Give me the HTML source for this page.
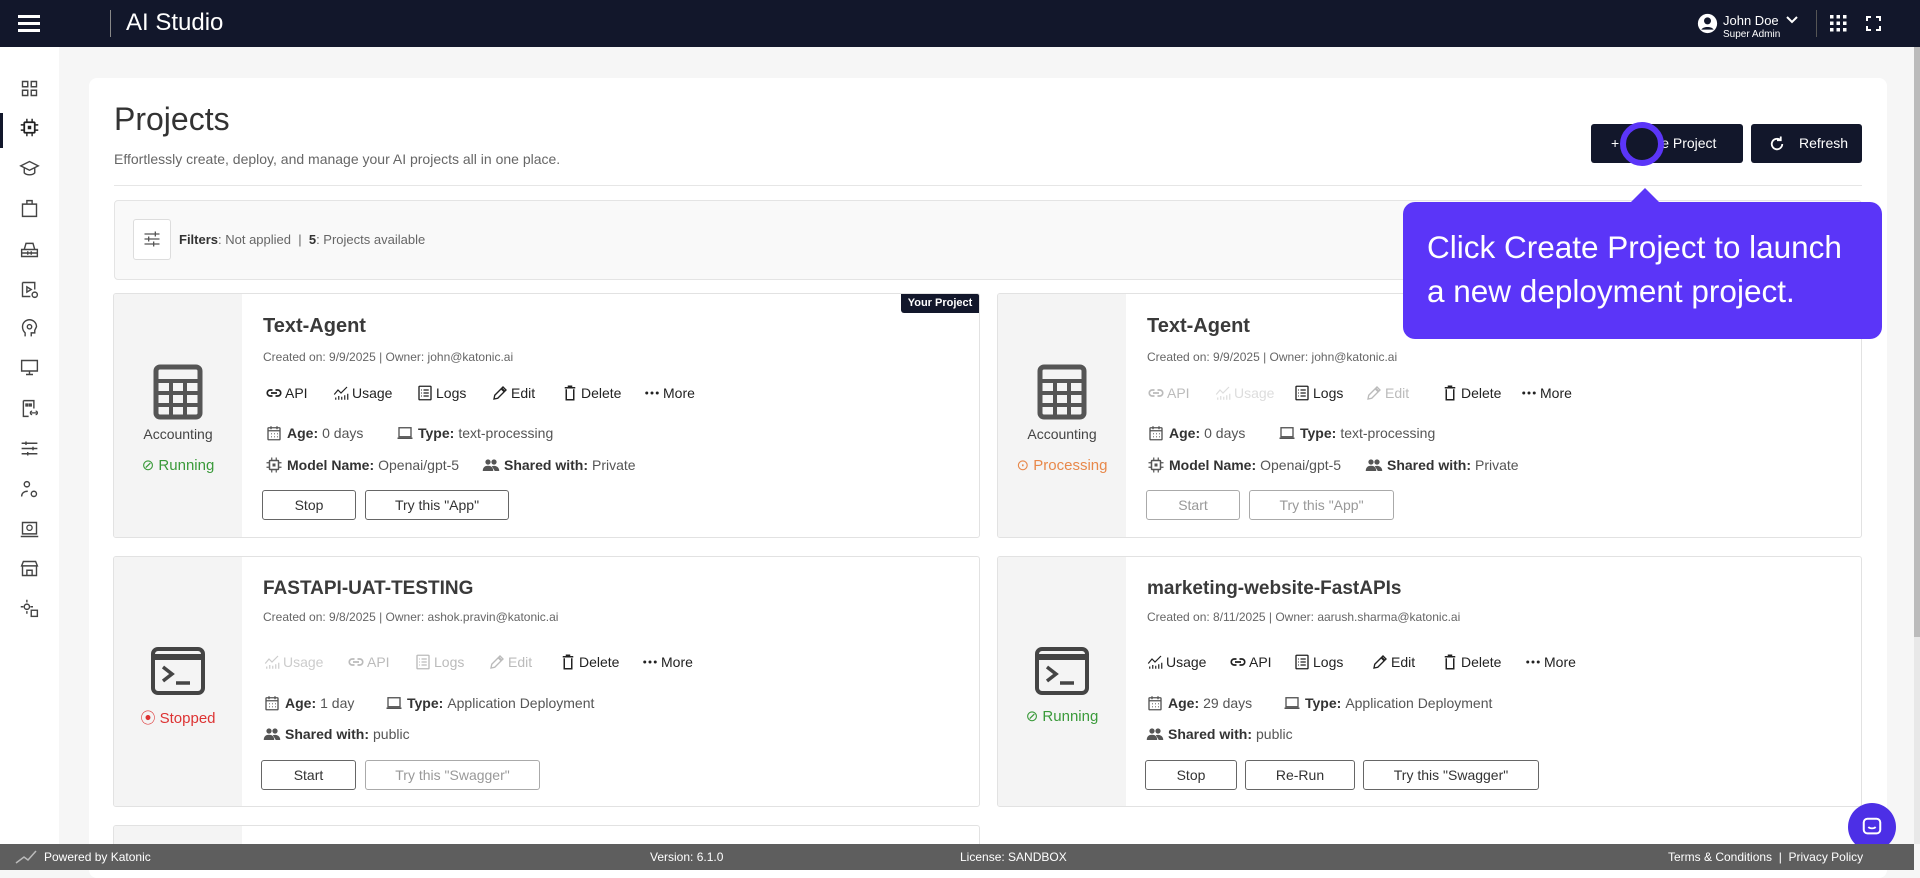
<!DOCTYPE html>
<html><head><meta charset="utf-8"><style>
*{box-sizing:border-box;margin:0;padding:0}
body{width:1920px;height:870px;overflow:hidden;font-family:"Liberation Sans",sans-serif;background:#f6f6f6;position:relative;color:#333}
.top{position:absolute;left:0;top:0;width:1920px;height:47px;background:#12172b;color:#fff}
.side{position:absolute;left:0;top:47px;width:59px;height:797px;background:#fff}
.side svg{position:absolute;left:19px;width:21px;height:21px}
.main{position:absolute;left:89px;top:78px;width:1798px;height:800px;background:#fff;border-radius:8px}
.abs{position:absolute}
.card{position:absolute;background:#fff;border:1px solid #e2e2e2;border-radius:3px;overflow:hidden}
.panel{position:absolute;left:0;top:0;bottom:0;width:128px;background:#f4f4f4}
.title{position:absolute;left:149px;font-size:20px;font-weight:bold;color:#3a3a3a}
.meta{position:absolute;left:149px;font-size:12px;color:#666}
.act{position:absolute;font-size:14px;color:#222;display:flex;align-items:center;gap:2px;white-space:nowrap}
.act svg{width:18px;height:18px}
.dis{color:#bbb}
.info{position:absolute;font-size:14px;color:#555;display:flex;align-items:center;gap:4px;white-space:nowrap}
.info b{color:#333}
.info svg{width:18px;height:18px}
.btn{position:absolute;height:30px;border:1px solid #666;border-radius:3px;font-size:14px;display:flex;align-items:center;justify-content:center;color:#333;background:#fff}
.btn.d{border-color:#aaa;color:#999}
.pl{position:absolute;width:128px;text-align:center;font-size:14px;color:#444}
.foot{position:absolute;left:0;top:844px;width:1914px;height:26px;background:#5e5e5e;color:#fff;font-size:12px}
.foot span{position:absolute;top:6px}
</style></head><body>
<svg width="0" height="0" style="position:absolute">
<defs>
<symbol id="link" viewBox="0 0 24 24"><path d="M10 8H7a4 4 0 0 0 0 8h3M14 8h3a4 4 0 0 1 0 8h-3M8 12h8" fill="none" stroke="currentColor" stroke-width="2.2"/></symbol>
<symbol id="usage" viewBox="0 0 24 24"><path d="M3 14l5-6 4 4 8-8M5 21v-3M9 21v-5M13 21v-4M17 21v-6M21 21v-8" fill="none" stroke="currentColor" stroke-width="1.6"/></symbol>
<symbol id="logs" viewBox="0 0 24 24"><rect x="4" y="3" width="16" height="18" rx="1" fill="none" stroke="currentColor" stroke-width="1.8"/><path d="M7 8h1M7 12h1M7 16h1M10 8h7M10 12h7M10 16h7" stroke="currentColor" stroke-width="1.6"/></symbol>
<symbol id="edit" viewBox="0 0 24 24"><path d="M4 20l1-5L16 4l4 4L9 19z" fill="none" stroke="currentColor" stroke-width="1.8"/><path d="M14 6l4 4" stroke="currentColor" stroke-width="3"/></symbol>
<symbol id="del" viewBox="0 0 24 24"><path d="M5 5h14M9 3h6M7 7v14h10V7" fill="none" stroke="currentColor" stroke-width="2"/></symbol>
<symbol id="more" viewBox="0 0 24 24"><circle cx="5" cy="12" r="2" fill="currentColor"/><circle cx="12" cy="12" r="2" fill="currentColor"/><circle cx="19" cy="12" r="2" fill="currentColor"/></symbol>
<symbol id="cal" viewBox="0 0 24 24"><rect x="4" y="5" width="16" height="16" rx="1" fill="none" stroke="currentColor" stroke-width="1.8"/><path d="M4 9h16M8 3v4M16 3v4M8 13h1M12 13h1M16 13h1M8 17h1M12 17h1M16 17h1" stroke="currentColor" stroke-width="1.8"/></symbol>
<symbol id="lap" viewBox="0 0 24 24"><rect x="4" y="5" width="16" height="12" fill="none" stroke="currentColor" stroke-width="1.8"/><path d="M2 19h20" stroke="currentColor" stroke-width="2"/></symbol>
<symbol id="chip" viewBox="0 0 24 24"><rect x="6" y="6" width="12" height="12" rx="1" fill="none" stroke="currentColor" stroke-width="2"/><rect x="10" y="10" width="4" height="4" fill="currentColor"/><path d="M9 2v4M15 2v4M9 18v4M15 18v4M2 9h4M2 15h4M18 9h4M18 15h4" stroke="currentColor" stroke-width="1.6"/></symbol>
<symbol id="ppl" viewBox="0 0 24 24"><circle cx="8" cy="8" r="3.5" fill="currentColor"/><circle cx="16" cy="8" r="3.5" fill="currentColor"/><path d="M1 20c0-5 3-7 7-7s7 2 7 7zM13 13.5c4-1 10 0 10 6.5h-6" fill="currentColor"/></symbol>
<symbol id="table" viewBox="0 0 50 56"><rect x="3" y="3" width="44" height="50" rx="4" fill="none" stroke="currentColor" stroke-width="5"/><path d="M3 17h44M3 29h44M3 41h44M18 17v36M32 17v36" stroke="currentColor" stroke-width="4"/></symbol>
<symbol id="term" viewBox="0 0 54 48"><rect x="2" y="2" width="50" height="44" rx="5" fill="none" stroke="currentColor" stroke-width="4"/><path d="M2 10h50" stroke="currentColor" stroke-width="6"/><path d="M12 20l9 7-9 7M25 36h14" fill="none" stroke="currentColor" stroke-width="3.5"/></symbol>
</defs></svg>

<div class="top">
 <div class="abs" style="left:18px;top:15px;width:22px;height:3px;background:#fff;box-shadow:0 7px 0 #fff,0 14px 0 #fff"></div>
 <div class="abs" style="left:110px;top:10px;width:1px;height:27px;background:#888"></div>
 <div class="abs" style="left:126px;top:9px;font-size:24px">AI Studio</div>
 <svg class="abs" style="left:1697px;top:13px" width="21" height="21" viewBox="0 0 24 24"><circle cx="12" cy="12" r="11" fill="#fff"/><circle cx="12" cy="9" r="4" fill="#12172b"/><path d="M5 19c2-4 12-4 14 0" fill="#12172b"/></svg>
 <div class="abs" style="left:1723px;top:13px;font-size:13px">John Doe</div>
 <svg class="abs" style="left:1786px;top:15px" width="12" height="10" viewBox="0 0 12 10"><path d="M1 2l5 5 5-5" stroke="#fff" stroke-width="2" fill="none"/></svg>
 <div class="abs" style="left:1723px;top:29px;font-size:10px">Super Admin</div>
 <div class="abs" style="left:1816px;top:10px;width:1px;height:27px;background:#555"></div>
 <svg class="abs" style="left:1830px;top:15px" width="17" height="17" viewBox="0 0 17 17" fill="#fff"><rect x="0" y="0" width="3.5" height="3.5"/><rect x="6.5" y="0" width="3.5" height="3.5"/><rect x="13" y="0" width="3.5" height="3.5"/><rect x="0" y="6.5" width="3.5" height="3.5"/><rect x="6.5" y="6.5" width="3.5" height="3.5"/><rect x="13" y="6.5" width="3.5" height="3.5"/><rect x="0" y="13" width="3.5" height="3.5"/><rect x="6.5" y="13" width="3.5" height="3.5"/><rect x="13" y="13" width="3.5" height="3.5"/></svg>
 <svg class="abs" style="left:1866px;top:16px" width="15" height="15" viewBox="0 0 15 15"><path d="M1 5V1h4M10 1h4v4M14 10v4h-4M5 14H1v-4" stroke="#fff" stroke-width="2" fill="none"/></svg>
</div>

<div class="side">
 <div class="abs" style="left:0;top:66px;width:3px;height:35px;background:#12172b"></div>
 <svg style="top:31px" viewBox="0 0 24 24"><path d="M4 4h6v6H4zM14 4h6v6h-6zM4 14h6v6H4zM14 14h6v6h-6z" fill="none" stroke="#444" stroke-width="1.6"/></svg>
 <svg style="top:70px" viewBox="0 0 24 24"><use href="#chip" color="#222"/></svg>
 <svg style="top:111px" viewBox="0 0 24 24"><path d="M2 9l10-5 10 5-10 5zM6 11v6c3 3 9 3 12 0v-6" fill="none" stroke="#444" stroke-width="1.6"/></svg>
 <svg style="top:151px" viewBox="0 0 24 24"><path d="M4 7h16v14H4zM9 7V3h6v4" fill="none" stroke="#444" stroke-width="1.6"/></svg>
 <svg style="top:192px" viewBox="0 0 24 24"><path d="M3 12h18v8H3zM6 12l2-7h8l2 7M3 16h18M10 14v4M14 14v4" fill="none" stroke="#444" stroke-width="1.6"/></svg>
 <svg style="top:232px" viewBox="0 0 24 24"><path d="M4 4h14v8M4 4v16h9M9 9l5 3-5 3z" fill="none" stroke="#444" stroke-width="1.6"/><circle cx="18" cy="18" r="3" fill="none" stroke="#444" stroke-width="1.6"/></svg>
 <svg style="top:271px" viewBox="0 0 24 24"><path d="M7 21v-4c-2-2-3-4-3-7a8 8 0 0 1 16 0l-2 4v3h-4v4" fill="none" stroke="#444" stroke-width="1.6"/><circle cx="12" cy="10" r="2.5" fill="none" stroke="#444" stroke-width="1.6"/></svg>
 <svg style="top:310px" viewBox="0 0 24 24"><path d="M3 4h18v12H3zM12 16v4M8 20h8" fill="none" stroke="#444" stroke-width="1.6"/></svg>
 <svg style="top:351px" viewBox="0 0 24 24"><path d="M5 3h12v9M5 3v18h6M8 7h2v2H8zM12 7h2v2h-2z" fill="none" stroke="#444" stroke-width="1.6"/><path d="M14 17h6M15 15a2 2 0 0 0 0 4M19 15a2 2 0 0 1 0 4" fill="none" stroke="#444" stroke-width="1.5"/></svg>
 <svg style="top:391px" viewBox="0 0 24 24"><path d="M3 6h18M3 12h18M3 18h18M8 4v4M16 10v4M10 16v4" fill="none" stroke="#444" stroke-width="1.6"/></svg>
 <svg style="top:432px" viewBox="0 0 24 24"><circle cx="9" cy="6" r="3" fill="none" stroke="#444" stroke-width="1.6"/><path d="M3 20c0-4 3-6 7-6M14 18h0" fill="none" stroke="#444" stroke-width="1.6"/><circle cx="17" cy="17" r="3" fill="none" stroke="#444" stroke-width="1.6"/></svg>
 <svg style="top:472px" viewBox="0 0 24 24"><path d="M4 4h16v13H4zM2 20h20" fill="none" stroke="#444" stroke-width="1.6"/><circle cx="12" cy="10" r="3" fill="none" stroke="#444" stroke-width="1.5"/></svg>
 <svg style="top:511px" viewBox="0 0 24 24"><path d="M3 9l2-5h14l2 5zM4 9v11h16V9M9 20v-6h6v6" fill="none" stroke="#444" stroke-width="1.6"/></svg>
 <svg style="top:551px" viewBox="0 0 24 24"><circle cx="9" cy="10" r="3" fill="none" stroke="#444" stroke-width="1.6"/><path d="M9 2v3M9 15v3M2 10h3M13 10h3" stroke="#444" stroke-width="1.6"/><rect x="14" y="14" width="7" height="7" fill="none" stroke="#444" stroke-width="1.6"/></svg>
</div>
<div class="abs" style="left:1914px;top:47px;width:6px;height:797px;background:#e8e8e8"></div>
<div class="abs" style="left:1914px;top:47px;width:6px;height:590px;background:#bbb"></div>

<div class="main">
 <div class="abs" style="left:25px;top:23px;font-size:32px;color:#333">Projects</div>
 <div class="abs" style="left:25px;top:73px;font-size:14px;color:#666">Effortlessly create, deploy, and manage your AI projects all in one place.</div>
 <div class="abs" style="left:25px;top:107px;width:1748px;height:1px;background:#e6e6e6"></div>
 <div class="abs" style="left:1502px;top:46px;width:152px;height:39px;background:#12172b;border-radius:3px;color:#fff;font-size:14px;line-height:39px;padding-left:20px">+ &nbsp;Create Project</div>
 <div class="abs" style="left:1662px;top:46px;width:111px;height:39px;background:#12172b;border-radius:3px;color:#fff;font-size:14px;line-height:39px;padding-left:48px">Refresh</div>
 <svg class="abs" style="left:1679px;top:57px" width="18" height="18" viewBox="0 0 24 24"><path d="M19 12a7 7 0 1 1-3-5.7M17 2v5h-5" fill="none" stroke="#fff" stroke-width="2.4"/></svg>
 <div class="abs" style="left:25px;top:122px;width:1748px;height:80px;background:#f9f9f9;border:1px solid #e4e4e4;border-radius:4px"></div>
 <div class="abs" style="left:44px;top:141px;width:38px;height:41px;border:1px solid #ddd;border-radius:3px;background:#fff"></div>
 <svg class="abs" style="left:53px;top:151px" width="20" height="20" viewBox="0 0 24 24"><path d="M3 6h18M3 12h18M3 18h18M16 3v6M8 9v6M14 15v6" fill="none" stroke="#555" stroke-width="1.6"/></svg>
 <div class="abs" style="left:90px;top:154px;font-size:13px;color:#666"><b style="color:#333">Filters</b>: Not applied &nbsp;| &nbsp;<b style="color:#333">5</b>: Projects available</div>
</div>

<!-- Card 1 -->
<div class="card" style="left:113px;top:293px;width:867px;height:245px">
 <div class="panel"></div>
 <svg class="abs" style="left:39px;top:70px;color:#555" width="50" height="56"><use href="#table"/></svg>
 <div class="pl" style="top:132px">Accounting</div>
 <div class="pl" style="top:162px;color:#3a9a3a;font-size:15px">&#x2298;&#xFE0E; Running</div>
 <div class="abs" style="right:0;top:0;width:78px;height:19px;background:#12172b;color:#fff;font-size:11px;font-weight:bold;text-align:center;line-height:19px;border-bottom-left-radius:3px">Your Project</div>
 <div class="title" style="top:21px">Text-Agent</div>
 <div class="meta" style="top:56px">Created on: 9/9/2025 | Owner: john@katonic.ai</div>
 <div class="act" style="left:151px;top:90px"><svg><use href="#link"/></svg>API</div>
 <div class="act" style="left:218px;top:90px"><svg><use href="#usage"/></svg>Usage</div>
 <div class="act" style="left:302px;top:90px"><svg><use href="#logs"/></svg>Logs</div>
 <div class="act" style="left:377px;top:90px"><svg><use href="#edit"/></svg>Edit</div>
 <div class="act" style="left:447px;top:90px"><svg><use href="#del"/></svg>Delete</div>
 <div class="act" style="left:529px;top:90px"><svg><use href="#more"/></svg>More</div>
 <div class="info" style="left:151px;top:130px"><svg><use href="#cal"/></svg><b>Age:</b> 0 days</div>
 <div class="info" style="left:282px;top:130px"><svg><use href="#lap"/></svg><b>Type:</b> text-processing</div>
 <div class="info" style="left:151px;top:162px"><svg><use href="#chip"/></svg><b>Model Name:</b> Openai/gpt-5</div>
 <div class="info" style="left:368px;top:162px"><svg><use href="#ppl"/></svg><b>Shared with:</b> Private</div>
 <div class="btn" style="left:148px;top:196px;width:94px">Stop</div>
 <div class="btn" style="left:251px;top:196px;width:144px">Try this "App"</div>
</div>

<!-- Card 2 -->
<div class="card" style="left:997px;top:293px;width:865px;height:245px">
 <div class="panel"></div>
 <svg class="abs" style="left:39px;top:70px;color:#555" width="50" height="56"><use href="#table"/></svg>
 <div class="pl" style="top:132px">Accounting</div>
 <div class="pl" style="top:162px;color:#e8884a;font-size:15px">&#x2299;&#xFE0E; Processing</div>
 <div class="title" style="top:21px">Text-Agent</div>
 <div class="meta" style="top:56px">Created on: 9/9/2025 | Owner: john@katonic.ai</div>
 <div class="act dis" style="left:149px;top:90px"><svg><use href="#link"/></svg>API</div>
 <div class="act dis" style="left:216px;top:90px;color:#ddd"><svg><use href="#usage"/></svg>Usage</div>
 <div class="act" style="left:295px;top:90px"><svg><use href="#logs"/></svg>Logs</div>
 <div class="act dis" style="left:367px;top:90px"><svg><use href="#edit"/></svg>Edit</div>
 <div class="act" style="left:443px;top:90px"><svg><use href="#del"/></svg>Delete</div>
 <div class="act" style="left:522px;top:90px"><svg><use href="#more"/></svg>More</div>
 <div class="info" style="left:149px;top:130px"><svg><use href="#cal"/></svg><b>Age:</b> 0 days</div>
 <div class="info" style="left:280px;top:130px"><svg><use href="#lap"/></svg><b>Type:</b> text-processing</div>
 <div class="info" style="left:149px;top:162px"><svg><use href="#chip"/></svg><b>Model Name:</b> Openai/gpt-5</div>
 <div class="info" style="left:367px;top:162px"><svg><use href="#ppl"/></svg><b>Shared with:</b> Private</div>
 <div class="btn d" style="left:148px;top:196px;width:94px">Start</div>
 <div class="btn d" style="left:251px;top:196px;width:145px">Try this "App"</div>
</div>

<!-- Card 3 -->
<div class="card" style="left:113px;top:556px;width:867px;height:251px">
 <div class="panel"></div>
 <svg class="abs" style="left:37px;top:90px;color:#444" width="54" height="48"><use href="#term"/></svg>
 <div class="pl" style="top:150px;color:#d33;font-size:15px">&#x29BF;&#xFE0E; Stopped</div>
 <div class="title" style="top:21px;font-size:19px">FASTAPI-UAT-TESTING</div>
 <div class="meta" style="top:53px">Created on: 9/8/2025 | Owner: ashok.pravin@katonic.ai</div>
 <div class="act dis" style="left:149px;top:96px;color:#ccc"><svg><use href="#usage"/></svg>Usage</div>
 <div class="act dis" style="left:233px;top:96px"><svg><use href="#link"/></svg>API</div>
 <div class="act dis" style="left:300px;top:96px"><svg><use href="#logs"/></svg>Logs</div>
 <div class="act dis" style="left:374px;top:96px"><svg><use href="#edit"/></svg>Edit</div>
 <div class="act" style="left:445px;top:96px"><svg><use href="#del"/></svg>Delete</div>
 <div class="act" style="left:527px;top:96px"><svg><use href="#more"/></svg>More</div>
 <div class="info" style="left:149px;top:137px"><svg><use href="#cal"/></svg><b>Age:</b> 1 day</div>
 <div class="info" style="left:271px;top:137px"><svg><use href="#lap"/></svg><b>Type:</b> Application Deployment</div>
 <div class="info" style="left:149px;top:168px"><svg><use href="#ppl"/></svg><b>Shared with:</b> public</div>
 <div class="btn" style="left:147px;top:203px;width:95px">Start</div>
 <div class="btn d" style="left:251px;top:203px;width:175px">Try this "Swagger"</div>
</div>

<!-- Card 4 -->
<div class="card" style="left:997px;top:556px;width:865px;height:251px">
 <div class="panel"></div>
 <svg class="abs" style="left:37px;top:90px;color:#444" width="54" height="48"><use href="#term"/></svg>
 <div class="pl" style="top:150px;color:#3a9a3a;font-size:15px">&#x2298;&#xFE0E; Running</div>
 <div class="title" style="top:21px;font-size:19px">marketing-website-FastAPIs</div>
 <div class="meta" style="top:53px">Created on: 8/11/2025 | Owner: aarush.sharma@katonic.ai</div>
 <div class="act" style="left:148px;top:96px"><svg><use href="#usage"/></svg>Usage</div>
 <div class="act" style="left:231px;top:96px"><svg><use href="#link"/></svg>API</div>
 <div class="act" style="left:295px;top:96px"><svg><use href="#logs"/></svg>Logs</div>
 <div class="act" style="left:373px;top:96px"><svg><use href="#edit"/></svg>Edit</div>
 <div class="act" style="left:443px;top:96px"><svg><use href="#del"/></svg>Delete</div>
 <div class="act" style="left:526px;top:96px"><svg><use href="#more"/></svg>More</div>
 <div class="info" style="left:148px;top:137px"><svg><use href="#cal"/></svg><b>Age:</b> 29 days</div>
 <div class="info" style="left:285px;top:137px"><svg><use href="#lap"/></svg><b>Type:</b> Application Deployment</div>
 <div class="info" style="left:148px;top:168px"><svg><use href="#ppl"/></svg><b>Shared with:</b> public</div>
 <div class="btn" style="left:147px;top:203px;width:92px">Stop</div>
 <div class="btn" style="left:247px;top:203px;width:110px">Re-Run</div>
 <div class="btn" style="left:365px;top:203px;width:176px">Try this "Swagger"</div>
</div>

<div class="card" style="left:113px;top:825px;width:867px;height:40px"><div class="panel"></div></div>

<!-- Tooltip -->
<div class="abs" style="left:1629px;top:188px;width:0;height:0;border-left:16px solid transparent;border-right:16px solid transparent;border-bottom:16px solid #5b35f8"></div>
<div class="abs" style="left:1403px;top:202px;width:479px;height:137px;background:#5b35f8;border-radius:12px;color:#fff;font-size:31.5px;line-height:44px;padding:23px 0 0 24px;white-space:nowrap">Click Create Project to launch<br>a new deployment project.</div>
<div class="abs" style="left:1620px;top:122px;width:44px;height:44px;border-radius:50%;border:6px solid #5b35f8;background:#12172b"></div>

<!-- chat -->
<div class="abs" style="left:1848px;top:803px;width:48px;height:48px;border-radius:50%;background:#4c2fe6"></div>
<svg class="abs" style="left:1861px;top:816px" width="22" height="22" viewBox="0 0 24 24"><rect x="3" y="3" width="18" height="16" rx="4" fill="none" stroke="#fff" stroke-width="2.2"/><path d="M8 12c2 2 6 2 8 0" stroke="#fff" stroke-width="2" fill="none"/></svg>

<div class="foot">
 <svg class="abs" style="left:14px;top:5px" width="24" height="16" viewBox="0 0 24 16"><path d="M2 14l8-6 4 3 8-9" stroke="#bbb" stroke-width="1.5" fill="none"/></svg>
 <span style="left:44px">Powered by Katonic</span>
 <span style="left:650px">Version: 6.1.0</span>
 <span style="left:960px">License: SANDBOX</span>
 <span style="left:1668px">Terms &amp; Conditions &nbsp;| &nbsp;Privacy Policy</span>
</div>
</body></html>
